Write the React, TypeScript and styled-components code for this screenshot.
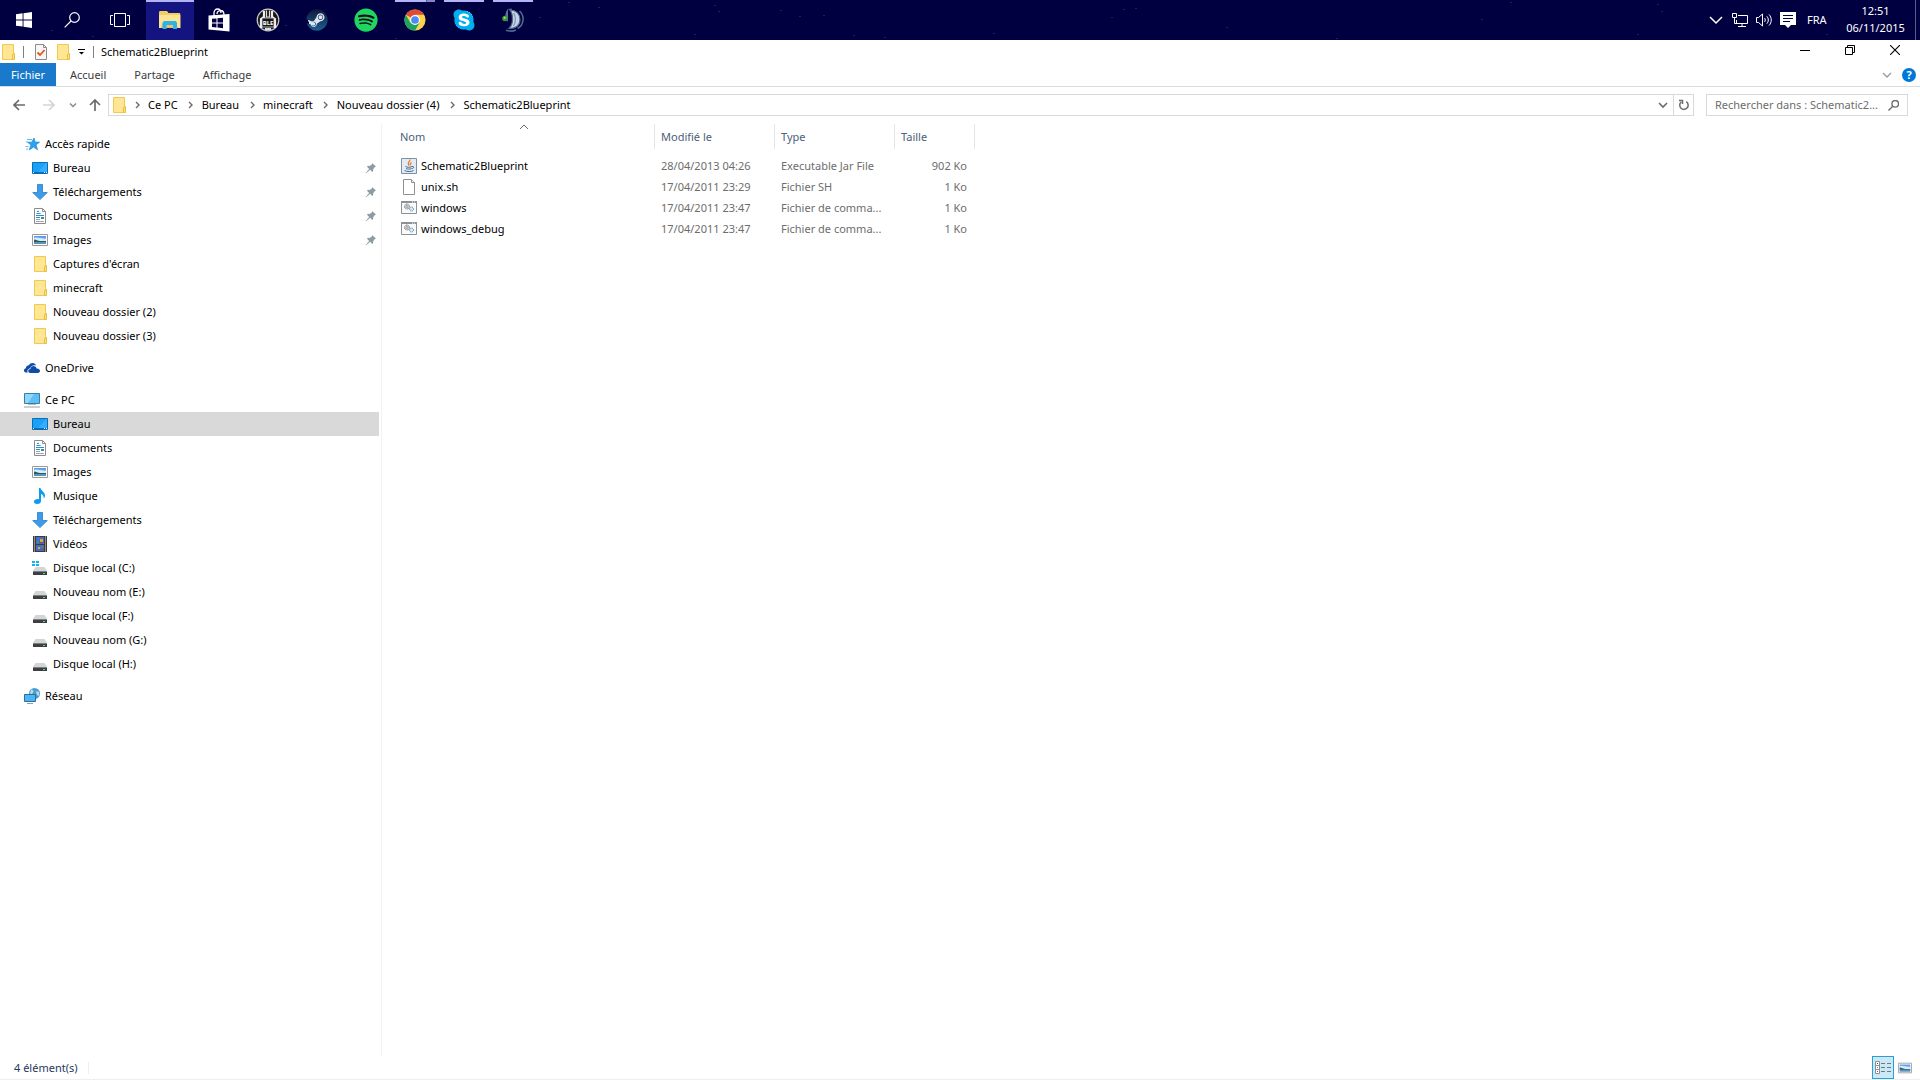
import React from "react";
import styled, { createGlobalStyle } from "styled-components";
import { FaSteam, FaSpotify, FaSkype } from "react-icons/fa";

const GlobalStyle = createGlobalStyle`
  *, *::before, *::after { box-sizing: border-box; }
  body {
    margin: 0;
    background: #fff;
    color: #000;
    font: 11px/16px "Noto Sans", "Open Sans", sans-serif;
  }
  button, input { font: inherit; color: inherit; }
  button { background: none; border: 0; padding: 0; margin: 0; cursor: default; }
  a { color: inherit; text-decoration: none; }
  ul, ol { list-style: none; margin: 0; padding: 0; }
  svg { display: block; flex: none; }
`;

const Desktop = styled.div`
  min-height: 100vh;
  display: flex;
  flex-direction: column;
`;

/* ---------- taskbar ---------- */

/* faint stars of the night-sky wallpaper showing through the bar */
const stars = [
  [51, 30], [92, 36], [285, 25], [395, 38], [539, 17], [568, 2], [598, 7], [694, 34],
  [714, 5], [718, 11], [780, 10], [799, 16], [823, 15], [853, 35], [884, 37], [993, 33],
  [1111, 17], [1123, 9], [1135, 8], [1226, 27], [1336, 38], [1481, 19], [1510, 2],
  [1637, 34], [1657, 4], [1661, 11], [1826, 34],
];

const starLayers = stars
  .map(([x, y]) => `linear-gradient(#20205a, #20205a) ${x}px ${y}px / 2px 1px no-repeat`)
  .join(", ");

const TaskbarBar = styled.header`
  height: 40px;
  display: flex;
  justify-content: space-between;
  background: ${starLayers}, #000040;
  color: #fff;
`;

const TaskGroup = styled.div<{ $gap: number }>`
  display: flex;
  gap: ${(p) => p.$gap}px;
`;

const Launchers = styled.div`
  display: flex;
  gap: 2px;
`;

const TaskButton = styled.button<{ $active?: boolean }>`
  width: 48px;
  height: 40px;
  display: flex;
  flex-direction: column;
  align-items: center;
  background: ${(p) => (p.$active ? "#141480" : "transparent")};
`;

const RunMark = styled.span<{ $kind: "none" | "single" | "stacked" | "full" }>`
  width: ${(p) => (p.$kind === "full" ? 48 : 40)}px;
  height: 2px;
  background: ${(p) =>
    p.$kind === "none"
      ? "transparent"
      : p.$kind === "stacked"
      ? "linear-gradient(90deg, #b3b3f8 31px, #5c5c99 31px, #5c5c99 32px, #8585c4 32px)"
      : "#b3b3f8"};
`;

const TaskIcon = styled.span`
  flex: 1;
  display: flex;
  align-items: center;
  padding-bottom: 2px;
`;

const Disc = styled.span<{ $tone: string }>`
  display: flex;
  border-radius: 50%;
  background: radial-gradient(circle, ${(p) => p.$tone} 55%, transparent 56%);
`;

const Tray = styled.div`
  display: flex;
  align-items: center;
`;

const TrayButton = styled.button`
  width: 24px;
  height: 40px;
  display: flex;
  align-items: center;
  justify-content: center;
`;

const Language = styled.button`
  width: 38px;
  height: 40px;
  padding-left: 7px;
  text-align: left;
`;

const Clock = styled.button`
  width: 77px;
  height: 40px;
  padding: 0 2px 2px 0;
  line-height: 17px;
  text-align: center;
`;

const ShowDesktop = styled.button`
  width: 5px;
  height: 40px;
  border-left: 1px solid #5c5c8c;
`;

/* ---------- window chrome ---------- */

const Window = styled.main`
  flex: 1;
  display: flex;
  flex-direction: column;
  border-bottom: 1px solid #eee;
`;

const TitleBar = styled.div`
  height: 23px;
  display: flex;
  justify-content: space-between;
`;

const QuickAccess = styled.div`
  display: flex;
  align-items: center;
`;

const QuickButton = styled.button<{ $w: number }>`
  width: ${(p) => p.$w}px;
  height: 20px;
  display: flex;
  align-items: center;
  justify-content: center;
`;

const Rule = styled.span`
  width: 1px;
  height: 12px;
  background: #808080;
`;

const Title = styled.h1`
  margin: 0 0 0 2px;
  font-size: 11px;
  font-weight: 400;
`;

const Caption = styled.div`
  display: flex;
  padding-right: 3px;
`;

const CaptionButton = styled.button`
  width: 45px;
  height: 20px;
  display: flex;
  align-items: center;
  justify-content: center;
`;

const Ribbon = styled.div`
  height: 24px;
  display: flex;
  justify-content: space-between;
  border-bottom: 1px solid #dadbdc;
`;

const Tabs = styled.div`
  display: flex;
`;

const FileTab = styled.button`
  width: 56px;
  background: #1979ca;
  color: #fff;
`;

const Tab = styled.button`
  padding: 0 14px;
  color: #3b3b3b;
`;

const RibbonTools = styled.div`
  display: flex;
  align-items: center;
  gap: 5px;
  padding-right: 4px;
`;

const Help = styled.button`
  width: 14px;
  height: 14px;
  border-radius: 50%;
  background: #0078d7;
  color: #fff;
  font-weight: 700;
  line-height: 14px;
`;

/* ---------- address row ---------- */

const AddressRow = styled.nav`
  height: 36px;
  display: flex;
  align-items: center;
  padding: 0 12px 0 5px;
`;

const NavButton = styled.button<{ $w: number }>`
  width: ${(p) => p.$w}px;
  height: 22px;
  display: flex;
  align-items: center;
  justify-content: center;
`;

const AddressBox = styled.div`
  flex: 1;
  height: 22px;
  display: flex;
  align-items: center;
  border: 1px solid #d9d9d9;
  padding-left: 2px;
`;

const Crumbs = styled.ol`
  flex: 1;
  display: flex;
  align-items: center;
`;

const Crumb = styled.li`
  display: flex;
  align-items: center;
`;

const CrumbLink = styled.a`
  padding-right: 3px;
`;

const ChevronCell = styled.span`
  width: 21px;
  padding-right: 2px;
  display: flex;
  justify-content: center;
`;

const BoxButton = styled.button<{ $ruled?: boolean }>`
  width: 20px;
  height: 20px;
  display: flex;
  align-items: center;
  justify-content: center;
  border-left: ${(p) => (p.$ruled ? "1px solid #d9d9d9" : "0")};
`;

const SearchBox = styled.label`
  width: 202px;
  height: 22px;
  margin-left: 12px;
  display: flex;
  align-items: center;
  border: 1px solid #d9d9d9;
  padding: 0 8px;
`;

const SearchInput = styled.input`
  flex: 1;
  min-width: 0;
  border: 0;
  padding: 0;
  outline: 0;
  background: transparent;
  &::placeholder { color: #6d6d6d; opacity: 1; }
`;

/* ---------- body ---------- */

const Body = styled.div`
  flex: 1;
  display: flex;
`;

const Sidebar = styled.aside`
  width: 382px;
  margin-top: 1px;
  padding: 8px 2px 0 0;
  border-right: 1px solid #f2f2f2;
`;

const Section = styled.ul`
  margin-bottom: 8px;
`;

const TreeRow = styled.li<{ $selected?: boolean }>`
  background: ${(p) => (p.$selected ? "#d9d9d9" : "transparent")};
`;

const TreeLink = styled.a<{ $level: number }>`
  height: 24px;
  display: flex;
  align-items: center;
  gap: 5px;
  padding: 0 3px 0 ${(p) => 24 + p.$level * 8}px;
`;

const TreeLabel = styled.span`
  flex: 1;
`;

const Files = styled.section`
  flex: 1;
  padding: 1px 0 0 11px;
`;

const Table = styled.table`
  width: 582px;
  table-layout: fixed;
  border-collapse: collapse;
`;

const HeadCell = styled.th`
  padding: 0 0 6px;
  font-weight: 400;
`;

const HeadButton = styled.button<{ $first?: boolean }>`
  position: relative;
  width: 100%;
  height: 25px;
  padding: 0 0 0 ${(p) => (p.$first ? 7 : 6)}px;
  border-right: 1px solid #e5e5e5;
  text-align: left;
  color: #4c607a;
`;

const SortMark = styled.span`
  position: absolute;
  top: 0;
  left: 50%;
  margin-left: -4px;
`;

const Cell = styled.td<{ $right?: boolean }>`
  height: 21px;
  padding: 0 8px 0 6px;
  color: #6d6d6d;
  text-align: ${(p) => (p.$right ? "right" : "left")};
  white-space: nowrap;
  overflow: hidden;
  text-overflow: ellipsis;
`;

const NameCell = styled(Cell)`
  color: #000;
  padding-left: 8px;
`;

const FileName = styled.span`
  display: flex;
  align-items: center;
  gap: 4px;
`;

const StatusBar = styled.footer`
  height: 23px;
  display: flex;
  justify-content: space-between;
  align-items: center;
  padding: 0 4px 0 14px;
`;

const Count = styled.span`
  padding-right: 10px;
  height: 12px;
  line-height: 12px;
  border-right: 1px solid #eee;
  color: #1e395b;
`;

const Views = styled.div`
  display: flex;
`;

const ViewButton = styled.button<{ $on?: boolean }>`
  width: 22px;
  height: 23px;
  display: flex;
  align-items: center;
  justify-content: center;
  border: ${(p) => (p.$on ? "1px solid #26a0da" : "0")};
  background: ${(p) => (p.$on ? "#cbe8f6" : "transparent")};
`;

/* ---------- drawings ---------- */

const FolderIcon = () => (
  <svg width="16" height="16" viewBox="0 0 16 16">
    <path d="M2.5.5h11v15h-11z" fill="#ffe694" stroke="#efca4e" />
    <path d="M12.5 15.5v-5l2-1v6z" fill="#ffe08a" stroke="#e6bf3e" />
  </svg>
);

const StarIcon = () => (
  <svg width="16" height="16" viewBox="0 0 16 16">
    <path d="M10 2l1 4 4.5.2-3.500 2.500 1.500 5-4-2.600-4.300 2.800 1.800-4.900L3.600 6.200h4.200z" fill="#2ba3ee" stroke="#1b86cf" strokeWidth=".7" />
    <path d="M3 3.500h5M1.500 10.500h3M2 13h2M2 6h2" stroke="#5fb9ef" />
  </svg>
);

const DesktopIcon = () => (
  <svg width="16" height="16" viewBox="0 0 16 16">
    <path d="M.5 2.500h15v11H.5z" fill="#18a0fb" stroke="#0b6fae" />
    <path d="M6 12l8-9h1v9z" fill="#35adff" />
    <path d="M1 12.500h14" stroke="#0a6fb5" />
    <path d="M1 12.500h1M12 12.500h1M14 12.500h1" stroke="#fff" />
  </svg>
);

const DownloadIcon = () => (
  <svg width="16" height="16" viewBox="0 0 16 16">
    <path d="M5.500.5h5v8h4.800L8 15.600.7 8.500h4.800z" fill="#3d9be9" stroke="#2b7fc7" strokeWidth=".8" />
  </svg>
);

const DocumentIcon = () => (
  <svg width="16" height="16" viewBox="0 0 16 16">
    <path d="M2.500.5h8l3 3v12h-11z" fill="#fff" stroke="#8c8c8c" />
    <path d="M10.500.5v3h3" fill="none" stroke="#8c8c8c" />
    <path d="M5 3.500h2M4.500 5.500h4M4 7.500h8M4 9.500h4" stroke="#2a8dd4" />
    <path d="M9 9h3v2H9z" fill="#3f8a8f" />
    <path d="M4 11.500h4M4 13.500h8" stroke="#9aa5ad" />
  </svg>
);

const PictureIcon = ({ size = 16 }: { size?: number }) => (
  <svg width={size} height={size} viewBox="0 0 16 16">
    <path d="M.5 2.500h15v11H.5z" fill="#fff" stroke="#9a9a9a" />
    <path d="M2 4h12v8H2z" fill="#5e9fec" />
    <path d="M2 6c3-1 4 0 6 0s4 1 6 .5V9H2z" fill="#d7ebf8" />
    <path d="M2 7.500c2 0 4 1.500 6 1.500h6v1H2z" fill="#2d5b58" />
    <path d="M2 10h12v2H2z" fill="#5c93b8" />
  </svg>
);

const MusicIcon = () => (
  <svg width="16" height="16" viewBox="0 0 16 16">
    <path d="M7 0h1.500c.3 2.600 4.500 4 4.500 7.500 0 1.600-.7 2.500-1.500 3 .8-2.500-.8-3.900-2.500-4.500v7c0 1.800-1.500 3-3.700 3C3.300 16 2 15 2 13.700c0-1.600 1.700-2.700 3.600-2.700.6 0 1 .1 1.400.3z" fill="#0c9bf0" />
  </svg>
);

const VideoIcon = () => (
  <svg width="16" height="16" viewBox="0 0 16 16">
    <path d="M1 0h14v16H1z" fill="#3b3b3b" />
    <path d="M2.500.5v15M13.500.5v15" stroke="#e8e8e8" strokeDasharray="1 1" />
    <path d="M4 1h8v7H4zM4 9h8v6H4z" fill="#3c6fd0" />
    <path d="M8 3h3v3H8zM6 11h2v2H6z" fill="#e2a42c" />
    <path d="M7 6h4v1H7zM9 13h3v1H9z" fill="#b03a2e" />
    <path d="M5 5h2v2H5zM9 10h2v2H9z" fill="#3f9a4a" />
  </svg>
);

const DriveIcon = ({ system }: { system?: boolean }) => (
  <svg width="16" height="16" viewBox="0 0 16 16">
    {system && <path d="M0 1h3v2H0zM4 1h3v2H4zM0 4h3v2H0zM4 4h3v2H4z" fill="#12b2f0" />}
    <path d="M3.500 7h9l2.500 4H1z" fill="#d3d5d8" />
    <path d="M1 11h14v4H1z" fill="#3d4043" />
    <path d="M1 11h14v1H1z" fill="#7e8184" />
    <path d="M11 13h2v1h-2z" fill="#4fe35a" />
  </svg>
);

const CloudIcon = () => (
  <svg width="16" height="16" viewBox="0 0 16 16">
    <path d="M3.600 12.500H2.200C.9 12.500 0 11.600 0 10.400c0-1.100.8-2 1.900-2.100C2 6.500 3.300 5.300 4.900 5.300 5.700 3.800 7 3 8.500 3c1.700 0 3 .9 3.600 2.400-3-.7-5.300.6-5.900 2.900-2.100.2-3.400 2.200-2.600 4.200z" fill="#0f4ba8" />
    <path d="M6.400 13C5 13 4.200 12.100 4.200 11c0-1.200 1-2 2.200-2 .2-1.800 1.500-2.900 3.100-2.900 1.500 0 2.700.9 3.100 2.300 1.900-.1 3.400.8 3.400 2.400 0 1.300-.9 2.200-2.100 2.200z" fill="#0f4ba8" />
  </svg>
);

const ComputerIcon = () => (
  <svg width="16" height="16" viewBox="0 0 16 16">
    <path d="M.5 1.500h15v10H.5z" fill="#5cc0f7" stroke="#3a7ca5" />
    <path d="M1 2h9L4 11H1z" fill="#90d6fb" />
    <path d="M4 12.500h8" stroke="#b4bcc2" />
    <path d="M0 15h16" stroke="#8fa0ad" />
  </svg>
);

const NetworkIcon = () => (
  <svg width="16" height="16" viewBox="0 0 16 16">
    <circle cx="10.500" cy="5.500" r="5.500" fill="#4d9ccb" />
    <path d="M7 1.500c2 0 3 1.500 2 3S7 7 6 5zM12 3l3 1v4l-2-1z" fill="#b6dcee" />
    <path d="M.5 6.500h11v7H.5z" fill="#4bb5f5" stroke="#2a6f9f" />
    <path d="M3 15.500h6" stroke="#8fa0ad" />
  </svg>
);

const PinIcon = () => (
  <svg width="10" height="10" viewBox="0 0 10 10">
    <path d="M6 0l4 3.500-1.200.6L7 6.500l.2 1.700-1 .8-2-2.200L.4 10H0v-.4l3.200-3.700L1 3.700l.9-.9 1.900.3L6 1.300z" fill="#8e9ba3" />
  </svg>
);

const JarIcon = () => (
  <svg width="16" height="16" viewBox="0 0 16 16">
    <path d="M.5.5h15v15H.5z" fill="#e3eaf1" stroke="#7892a8" />
    <path d="M8.800 1.500c1 2-3.300 3-.8 6M10.500 4.500c-1 .8-2 1.300-1 3" fill="none" stroke="#e8772e" strokeWidth="1.200" />
    <path d="M4.500 8.500c1.500 1 5 1 6.500 0M5 10.500c1.500.8 4 .8 5.500 0M11 8.500c2.500-.5 2 2-.3 2.200M3.500 12.500c2 1.400 7.500 1.400 9 0" fill="none" stroke="#436e90" />
  </svg>
);

const BlankIcon = () => (
  <svg width="16" height="16" viewBox="0 0 16 16">
    <path d="M2.500.5h8l3 3v12h-11z" fill="#fff" stroke="#909090" />
    <path d="M10.500.5v3h3" fill="#eee" stroke="#909090" />
  </svg>
);

const BatchIcon = () => (
  <svg width="16" height="16" viewBox="0 0 16 16">
    <path d="M.5 1.500h15v12H.5z" fill="#fafafa" stroke="#8b9297" />
    <path d="M0 2h16" stroke="#8b9297" strokeWidth="2" />
    <path d="M11 2h1M13 2h1" stroke="#fff" />
    <circle cx="6" cy="6.500" r="2.500" fill="#ddd" stroke="#777" strokeDasharray="1 .5" />
    <circle cx="6" cy="6.500" r="1" fill="#fff" stroke="#777" strokeWidth=".7" />
    <circle cx="10.500" cy="9" r="2" fill="#d3e9f8" stroke="#4a90c2" strokeDasharray="1 .5" />
  </svg>
);

const CheckPageIcon = () => (
  <svg width="12" height="16" viewBox="0 0 12 16">
    <path d="M.5.5h8l3 3v12H.5z" fill="#f7f7f7" stroke="#8c8c8c" />
    <path d="M8.500.5v3h3" fill="none" stroke="#8c8c8c" />
    <path d="M2.500 8.500l2.500 2.500 4.500-5" fill="none" stroke="#e9521d" strokeWidth="1.800" />
  </svg>
);

const QuickMenuIcon = () => (
  <svg width="7" height="7" viewBox="0 0 7 7">
    <path d="M0 1.500h7" stroke="#000" />
    <path d="M1 4h5L3.500 6.500z" fill="#000" />
  </svg>
);

type Dir = "right" | "down" | "up";
const CHEVRONS: Record<Dir, string> = {
  right: "M3 1l3 3-3 3",
  down: "M0 2l4 4 4-4",
  up: "M0 5l4-4 4 4",
};

const Chevron = ({ dir, size = 8, color = "#6b6b6b", weight = 1 }: { dir: Dir; size?: number; color?: string; weight?: number }) => (
  <svg width={size} height={size} viewBox="0 0 8 8" overflow="visible">
    <path d={CHEVRONS[dir]} fill="none" stroke={color} strokeWidth={weight} />
  </svg>
);

const Arrow = ({ turn, color }: { turn: number; color: string }) => (
  <svg width="12" height="12" viewBox="0 0 12 12">
    <path d="M12 6H1M6 1L1 6l5 5" transform={`rotate(${turn} 6 6)`} fill="none" stroke={color} strokeWidth="1.700" />
  </svg>
);

const RefreshIcon = () => (
  <svg width="12" height="12" viewBox="0 0 12 12">
    <path d="M8.300 2.700A4.200 4.200 0 1 1 3.200 3" fill="none" stroke="#6b6b6b" strokeWidth="1.500" />
    <path d="M1 1.500h3.500V5" fill="none" stroke="#6b6b6b" strokeWidth="1.500" />
  </svg>
);

const Magnifier = ({ size, color, weight }: { size: number; color: string; weight: number }) => (
  <svg width={size} height={size} viewBox="0 0 16 16">
    <circle cx="10.500" cy="5.500" r="4.800" fill="none" stroke={color} strokeWidth={weight} />
    <path d="M7 9L.7 15.300" stroke={color} strokeWidth={weight} />
  </svg>
);

const WindowsLogo = () => (
  <svg width="16" height="16" viewBox="0 0 16 16">
    <defs>
      <linearGradient id="steam" x1="0" y1="0" x2="0" y2="1">
        <stop offset="0" stopColor="#11173a" />
        <stop offset="1" stopColor="#1c5f93" />
      </linearGradient>
    </defs>
    <path d="M0 2.200L6.600 1.300v6.200H0zM7.500 1.200L16 0v7.500H7.500zM0 8.400h6.600v6.200L0 13.700zM7.500 8.400H16V16l-8.500-1.200z" fill="#fff" />
  </svg>
);

const TaskViewIcon = () => (
  <svg width="20" height="14" viewBox="0 0 20 14">
    <path d="M4.500.5h11v13h-11zM3 2.500H.5v9H3M17 2.500h2.500v9H17" fill="none" stroke="#fff" />
  </svg>
);

const ExplorerIcon = () => (
  <svg width="22" height="18" viewBox="0 0 22 18">
    <path d="M0 1.500C0 .7.500 0 1.300 0H8l1.500 2H20c.8 0 1.300.5 1.300 1.300V17H0z" fill="#f3cd62" />
    <path d="M0 4h21.300v13H0z" fill="#ffe394" />
    <path d="M2 17l1-4h14l2 4z" fill="#efc45c" />
    <path d="M3.500 18v-6.500l1.500-1.500h11.500l1.500 1.500V18h-4v-4H7.500v4z" fill="#2cb4e8" />
  </svg>
);

const StoreIcon = () => (
  <svg width="22" height="24" viewBox="0 0 22 24">
    <path d="M6 8V5c0-2.500 1.500-4 3.500-4S13 2.500 13 5M9 6c0-2 1.500-3.500 3.500-3.500S16 4 16 7" fill="none" stroke="#fff" strokeWidth="1.300" />
    <path d="M.5 7.500L21.500 6v17.500L.5 21.500z" fill="#fff" />
    <path d="M4 10.800l4.500-.4v4.100H4zM9.500 10.300l5.500-.5v4.700H9.500zM4 15.500h4.500v4L4 19.100zM9.500 15.500H15v4.700l-5.500-.6z" fill="#000040" />
  </svg>
);

const BleIcon = () => (
  <svg width="24" height="24" viewBox="0 0 24 24">
    <circle cx="12" cy="12" r="10.800" fill="#161616" stroke="#c9c9c9" strokeWidth="1.200" />
    <path d="M8 3v6l-3 2v9M16 3v6l3 2v9" fill="none" stroke="#eee" strokeWidth="2.200" />
    <path d="M10.500 2.500v6.500h3v-6.500" fill="none" stroke="#ddd" strokeWidth="1.200" />
    <path d="M6 10h12v9H6z" fill="#161616" stroke="#ddd" strokeWidth=".8" />
    <text x="12" y="16.500" textAnchor="middle" fontSize="6" fontWeight="700" fill="#fff">BLE</text>
    <path d="M9 20h6v2H9z" fill="#ddd" />
  </svg>
);

const ChromeIcon = () => (
  <svg width="22" height="22" viewBox="0 0 24 24">
    <circle cx="12" cy="12" r="11.500" fill="#fcd34b" />
    <path d="M12 12L2.040 6.250A11.500 11.500 0 0 1 21.960 6.250H12z" fill="#dd4b3e" />
    <path d="M2.040 6.250A11.500 11.500 0 0 0 12 23.500l5-8.600L12 12 7 14.900z" fill="#1da362" />
    <circle cx="12" cy="12" r="5.400" fill="#fff" />
    <circle cx="12" cy="12" r="4.200" fill="#4b8bf5" />
  </svg>
);

const TeamSpeakIcon = () => (
  <svg width="24" height="24" viewBox="0 0 24 24">
    <path d="M7 1c-2 2-3 5-2.500 9L7 14V4zM7 1l4-.5-1 3z" fill="#5c6f92" />
    <path d="M9 2C15 2 19 6 19 11.500S15 21 8 20.500c2-2 3.500-5 3.500-9S11 4.500 9 2z" fill="#c6d3e4" stroke="#51678c" strokeWidth="1.200" />
    <path d="M12.500 5c2.500 3 2.500 9.500 0 13" fill="none" stroke="#7f93b3" strokeWidth="1.200" />
    <path d="M18.500 3c5.500 5 4.500 14-2 17.500M15 22c-3 1.500-6 1.500-10 .3" fill="none" stroke="#4b6890" strokeWidth="1.600" />
    <circle cx="4" cy="10.500" r="2.800" fill="#3d9a33" />
    <circle cx="3.600" cy="9.800" r="1" fill="#a8e29c" />
  </svg>
);

const TrayNetworkIcon = () => (
  <svg width="16" height="14" viewBox="0 0 16 14">
    <path d="M6 2.500h9.500v8H4.500V7M10 10.500v3M6 13.500h8M.5.500h4v4h-4zM2.500 4.500v6H5" fill="none" stroke="#fff" />
  </svg>
);

const VolumeIcon = () => (
  <svg width="17" height="14" viewBox="0 0 17 14">
    <path d="M.5 4.500h2l4-3.500v12l-4-3.500h-2zM8.500 5c1 1 1 3 0 4M10.800 3.300c2 2 2 5.400 0 7.400M13 1.500c3 3 3 8 0 11" fill="none" stroke="#fff" />
  </svg>
);

const MessageIcon = () => (
  <svg width="16" height="16" viewBox="0 0 16 16">
    <path d="M0 0h16v13h-5l-3 3-3-3H0z" fill="#fff" />
    <path d="M3 3.500h10M3 6.500h10M3 9.500h7" stroke="#000040" />
  </svg>
);

const MinimizeIcon = () => (
  <svg width="10" height="10" viewBox="0 0 10 10"><path d="M0 5.500h10" stroke="#000" /></svg>
);
const RestoreIcon = () => (
  <svg width="10" height="10" viewBox="0 0 10 10"><path d="M.5 2.500h7v7h-7zM2.500 2.500v-2h7v7h-2" fill="none" stroke="#000" /></svg>
);
const CloseIcon = () => (
  <svg width="10" height="10" viewBox="0 0 10 10"><path d="M0 0l10 10M10 0L0 10" stroke="#000" strokeWidth="1.100" /></svg>
);

const DetailsIcon = () => (
  <svg width="16" height="13" viewBox="0 0 16 13">
    <path d="M.5.500h4v12h-4zM.5 4.500h4M.5 8.500h4" fill="#fff" stroke="#8f8f8f" />
    <path d="M2 2.500h1" stroke="#444" />
    <path d="M2 6.500h1" stroke="#26a0da" />
    <path d="M2 10.500h1" stroke="#d03a2a" />
    <path d="M6 2.500h4M12 2.500h4M6 6.500h4M12 6.500h4M6 10.500h4M12 10.500h4" stroke="#6d7a82" />
  </svg>
);

/* ---------- data ---------- */

type Mark = "none" | "single" | "stacked" | "full";

const apps: { name: string; icon: React.ReactNode; mark: Mark }[] = [
  { name: "Explorateur de fichiers", icon: <ExplorerIcon />, mark: "full" },
  { name: "Store", icon: <StoreIcon />, mark: "none" },
  { name: "BLE", icon: <BleIcon />, mark: "none" },
  { name: "Steam", icon: <Disc $tone="#dfe5ee"><FaSteam size={22} fill="url(#steam)" /></Disc>, mark: "none" },
  { name: "Spotify", icon: <Disc $tone="#10101a"><FaSpotify size={24} color="#1ed760" /></Disc>, mark: "none" },
  { name: "Chrome", icon: <ChromeIcon />, mark: "stacked" },
  { name: "Skype", icon: <Disc $tone="#fff"><FaSkype size={24} color="#00aff0" /></Disc>, mark: "single" },
  { name: "TeamSpeak", icon: <TeamSpeakIcon />, mark: "single" },
];

type Node = { label: string; icon: React.ReactNode; pinned?: boolean; selected?: boolean };

const sections: Node[][] = [
  [
    { label: "Accès rapide", icon: <StarIcon /> },
    { label: "Bureau", icon: <DesktopIcon />, pinned: true },
    { label: "Téléchargements", icon: <DownloadIcon />, pinned: true },
    { label: "Documents", icon: <DocumentIcon />, pinned: true },
    { label: "Images", icon: <PictureIcon />, pinned: true },
    { label: "Captures d'écran", icon: <FolderIcon /> },
    { label: "minecraft", icon: <FolderIcon /> },
    { label: "Nouveau dossier (2)", icon: <FolderIcon /> },
    { label: "Nouveau dossier (3)", icon: <FolderIcon /> },
  ],
  [{ label: "OneDrive", icon: <CloudIcon /> }],
  [
    { label: "Ce PC", icon: <ComputerIcon /> },
    { label: "Bureau", icon: <DesktopIcon />, selected: true },
    { label: "Documents", icon: <DocumentIcon /> },
    { label: "Images", icon: <PictureIcon /> },
    { label: "Musique", icon: <MusicIcon /> },
    { label: "Téléchargements", icon: <DownloadIcon /> },
    { label: "Vidéos", icon: <VideoIcon /> },
    { label: "Disque local (C:)", icon: <DriveIcon system /> },
    { label: "Nouveau nom (E:)", icon: <DriveIcon /> },
    { label: "Disque local (F:)", icon: <DriveIcon /> },
    { label: "Nouveau nom (G:)", icon: <DriveIcon /> },
    { label: "Disque local (H:)", icon: <DriveIcon /> },
  ],
  [{ label: "Réseau", icon: <NetworkIcon /> }],
];

const crumbs = ["Ce PC", "Bureau", "minecraft", "Nouveau dossier (4)", "Schematic2Blueprint"];

const files = [
  { name: "Schematic2Blueprint", icon: <JarIcon />, date: "28/04/2013 04:26", type: "Executable Jar File", size: "902 Ko" },
  { name: "unix.sh", icon: <BlankIcon />, date: "17/04/2011 23:29", type: "Fichier SH", size: "1 Ko" },
  { name: "windows", icon: <BatchIcon />, date: "17/04/2011 23:47", type: "Fichier de comma...", size: "1 Ko" },
  { name: "windows_debug", icon: <BatchIcon />, date: "17/04/2011 23:47", type: "Fichier de comma...", size: "1 Ko" },
];

/* ---------- parts ---------- */

const Taskbar = () => (
  <TaskbarBar>
    <Launchers>
      <TaskGroup $gap={0}>
        <TaskButton aria-label="Démarrer"><RunMark $kind="none" /><TaskIcon><WindowsLogo /></TaskIcon></TaskButton>
        <TaskButton aria-label="Rechercher"><RunMark $kind="none" /><TaskIcon><Magnifier size={16} color="#fff" weight={1.2} /></TaskIcon></TaskButton>
        <TaskButton aria-label="Vue des tâches"><RunMark $kind="none" /><TaskIcon><TaskViewIcon /></TaskIcon></TaskButton>
      </TaskGroup>
      <TaskGroup $gap={1}>
        {apps.map((a) => (
          <TaskButton key={a.name} aria-label={a.name} $active={a.mark === "full"}>
            <RunMark $kind={a.mark} />
            <TaskIcon>{a.icon}</TaskIcon>
          </TaskButton>
        ))}
      </TaskGroup>
    </Launchers>
    <Tray>
      <TrayButton aria-label="Icônes cachées"><Chevron dir="down" size={12} color="#fff" /></TrayButton>
      <TrayButton aria-label="Réseau"><TrayNetworkIcon /></TrayButton>
      <TrayButton aria-label="Volume"><VolumeIcon /></TrayButton>
      <TrayButton aria-label="Notifications"><MessageIcon /></TrayButton>
      <Language>FRA</Language>
      <Clock>12:51<br />06/11/2015</Clock>
      <ShowDesktop aria-label="Afficher le bureau" />
    </Tray>
  </TaskbarBar>
);

const Tree = () => (
  <Sidebar>
    {sections.map((nodes, s) => (
      <Section key={s}>
        {nodes.map((n, i) => (
          <TreeRow key={n.label} $selected={n.selected}>
            <TreeLink href="#" $level={i === 0 ? 0 : 1}>
              {n.icon}
              <TreeLabel>{n.label}</TreeLabel>
              {n.pinned && <PinIcon />}
            </TreeLink>
          </TreeRow>
        ))}
      </Section>
    ))}
  </Sidebar>
);

const FileTable = () => (
  <Files>
    <Table>
      <colgroup>
        <col width="262" />
        <col width="120" />
        <col width="120" />
        <col width="80" />
      </colgroup>
      <thead>
        <tr>
          <HeadCell>
            <HeadButton $first>
              Nom
              <SortMark><Chevron dir="up" /></SortMark>
            </HeadButton>
          </HeadCell>
          <HeadCell><HeadButton>Modifié le</HeadButton></HeadCell>
          <HeadCell><HeadButton>Type</HeadButton></HeadCell>
          <HeadCell><HeadButton>Taille</HeadButton></HeadCell>
        </tr>
      </thead>
      <tbody>
        {files.map((f) => (
          <tr key={f.name}>
            <NameCell><FileName>{f.icon}{f.name}</FileName></NameCell>
            <Cell>{f.date}</Cell>
            <Cell>{f.type}</Cell>
            <Cell $right>{f.size}</Cell>
          </tr>
        ))}
      </tbody>
    </Table>
  </Files>
);

export default function App() {
  return (
    <Desktop>
      <GlobalStyle />
      <Taskbar />
      <Window>
        <TitleBar>
          <QuickAccess>
            <QuickButton $w={16} aria-label="Menu système"><FolderIcon /></QuickButton>
            <QuickButton $w={15} as="span"><Rule /></QuickButton>
            <QuickButton $w={20} aria-label="Propriétés"><CheckPageIcon /></QuickButton>
            <QuickButton $w={24} aria-label="Nouveau dossier"><FolderIcon /></QuickButton>
            <QuickButton $w={13} aria-label="Personnaliser"><QuickMenuIcon /></QuickButton>
            <QuickButton $w={11} as="span"><Rule /></QuickButton>
            <Title>Schematic2Blueprint</Title>
          </QuickAccess>
          <Caption>
            <CaptionButton aria-label="Réduire"><MinimizeIcon /></CaptionButton>
            <CaptionButton aria-label="Restaurer"><RestoreIcon /></CaptionButton>
            <CaptionButton aria-label="Fermer"><CloseIcon /></CaptionButton>
          </Caption>
        </TitleBar>
        <Ribbon>
          <Tabs>
            <FileTab>Fichier</FileTab>
            <Tab>Accueil</Tab>
            <Tab>Partage</Tab>
            <Tab>Affichage</Tab>
          </Tabs>
          <RibbonTools>
            <QuickButton $w={20} aria-label="Développer le ruban"><Chevron dir="down" color="#9a9a9a" weight={1.3} /></QuickButton>
            <Help aria-label="Aide">?</Help>
          </RibbonTools>
        </Ribbon>
        <AddressRow>
          <NavButton $w={28} aria-label="Précédent"><Arrow turn={0} color="#6b6b6b" /></NavButton>
          <NavButton $w={32} aria-label="Suivant"><Arrow turn={180} color="#d5d5d5" /></NavButton>
          <NavButton $w={16} aria-label="Emplacements récents"><Chevron dir="down" size={6} color="#8a8a8a" weight={2} /></NavButton>
          <NavButton $w={27} aria-label="Dossier parent"><Arrow turn={90} color="#6b6b6b" /></NavButton>
          <AddressBox>
            <FolderIcon />
            <Crumbs>
              {crumbs.map((c) => (
                <Crumb key={c}>
                  <ChevronCell><Chevron dir="right" weight={1.4} /></ChevronCell>
                  <CrumbLink href="#">{c}</CrumbLink>
                </Crumb>
              ))}
            </Crumbs>
            <BoxButton aria-label="Adresses précédentes"><Chevron dir="down" color="#6b6b6b" weight={1.6} /></BoxButton>
            <BoxButton $ruled aria-label="Actualiser"><RefreshIcon /></BoxButton>
          </AddressBox>
          <SearchBox>
            <SearchInput type="text" aria-label="Rechercher" placeholder="Rechercher dans : Schematic2..." />
            <Magnifier size={11} color="#6b6b6b" weight={2} />
          </SearchBox>
        </AddressRow>
        <Body>
          <Tree />
          <FileTable />
        </Body>
        <StatusBar>
          <Count>4 élément(s)</Count>
          <Views>
            <ViewButton $on aria-label="Détails"><DetailsIcon /></ViewButton>
            <ViewButton aria-label="Grandes icônes"><PictureIcon size={14} /></ViewButton>
          </Views>
        </StatusBar>
      </Window>
    </Desktop>
  );
}
